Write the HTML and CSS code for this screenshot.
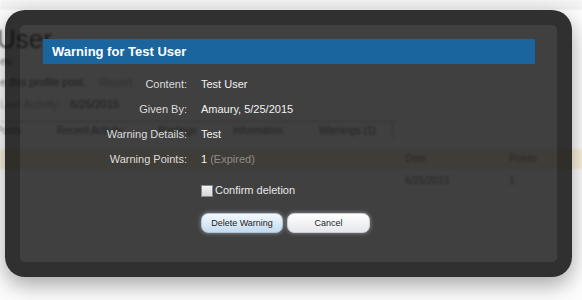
FILE: index.html
```html
<!DOCTYPE html>
<html lang="en">
<head>
  <meta charset="UTF-8">
  <title>Warning for Test User</title>
  <meta name="viewport" content="width=device-width, initial-scale=1.0">
  <link rel="stylesheet" href="styles.css">
</head>
<body>
  <div class="page">
    <div class="topbar"></div>

    <div class="profile">
      <h1 class="profile-name">User</h1>
      <p class="profile-sub">ev.</p>
      <p class="profile-post">e this profile post. <span class="muted">Report</span></p>
      <p class="profile-date"><span class="muted">Last Activity:</span> 6/25/2015</p>
    </div>

    <ul class="tabs">
      <li>Posts</li>
      <li>Recent Activity</li>
      <li>Postings</li>
      <li>Information</li>
      <li class="active">Warnings (1)</li>
    </ul>

    <div class="warn-table">
      <div class="warn-head">
        <span class="col-date">Date</span>
        <span class="col-points">Points</span>
      </div>
      <div class="warn-row">
        <span class="col-date">6/25/2015</span>
        <span class="col-points">1</span>
      </div>
    </div>
  </div>

  <div class="overlay">
    <h2 class="overlay-title">Warning for Test User</h2>

    <dl class="unit">
      <dt>Content:</dt>
      <dd>Test User</dd>
    </dl>
    <dl class="unit">
      <dt>Given By:</dt>
      <dd>Amaury, 5/25/2015</dd>
    </dl>
    <dl class="unit">
      <dt>Warning Details:</dt>
      <dd>Test</dd>
    </dl>
    <dl class="unit">
      <dt>Warning Points:</dt>
      <dd>1 <span class="expired">(Expired)</span></dd>
    </dl>

    <div class="unit confirm">
      <label><input type="checkbox" class="check"> Confirm deletion</label>
    </div>

    <div class="unit buttons">
      <button type="button" class="btn primary">Delete Warning</button>
      <button type="button" class="btn">Cancel</button>
    </div>
  </div>
</body>
</html>
```

FILE: styles.css
```css
* {
  box-sizing: border-box;
}

body {
  margin: 0;
  height: 300px;
  overflow: hidden;
  background: #fdfdfd;
  font-family: "Liberation Sans", Arial, sans-serif;
  font-size: 11px;
  color: #222;
}

/* page behind the overlay */

.page {
  filter: blur(0.8px);
}

.topbar {
  height: 9px;
  background: #f2f2f2;
  border-bottom: 1px solid #e2e2e2;
}

.profile {
  padding-top: 16px;
  color: #777;
}

.profile p {
  margin: 0;
  line-height: 16px;
}

.profile-name {
  margin: 0 0 0 -3px;
  font-size: 26px;
  font-weight: normal;
  line-height: 28px;
  color: #666;
}

.profile-post {
  margin-top: 5px !important;
}

.profile-date {
  margin-top: 6px !important;
}

.muted {
  color: #bbb;
  margin-left: 10px;
}

.profile-date .muted {
  margin: 0 6px 0 0;
}

.tabs {
  display: flex;
  gap: 36px;
  list-style: none;
  margin: 9px 0 0;
  padding: 0;
  font-size: 10px;
  color: #888;
  height: 18px;
  line-height: 18px;
  border-top: 1px solid #d4d4d4;
  width: 398px;
}

.tabs li:first-child {
  margin-left: -4px;
}

.tabs li.active {
  padding-right: 16px;
  border-right: 1px solid #d4d4d4;
}

.warn-table {
  margin-top: 10px;
  font-size: 10px;
  color: #999;
}

.warn-head,
.warn-row {
  display: flex;
  padding-left: 405px;
}

.warn-head {
  height: 20px;
  line-height: 20px;
  background: #fbf2da;
}

.warn-row {
  height: 24px;
  line-height: 24px;
}

.col-date {
  width: 104px;
}

/* overlay */

.overlay {
  position: absolute;
  left: 5px;
  top: 10px;
  width: 567px;
  padding: 14px 22px 29px 23px;
  background: rgba(0, 0, 0, 0.75);
  border: 15px solid rgba(0, 0, 0, 0.25);
  border-radius: 20px;
  box-shadow: 0 8px 22px rgba(0, 0, 0, 0.35);
  color: #e6e6e6;
}

.overlay-title {
  margin: 0;
  height: 25px;
  line-height: 25px;
  padding-left: 9px;
  background: #1a659e;
  color: #fff;
  font-size: 13px;
  font-weight: bold;
}

.unit {
  display: flex;
  margin: 10px 0 0;
  line-height: 15px;
}

.overlay-title + .unit {
  margin-top: 13px;
}

.unit dt {
  width: 144px;
  text-align: right;
  color: #dcdcdc;
}

.unit dd {
  margin: 0 0 0 14px;
  color: #f2f2f2;
}

.expired {
  color: #8c8c8c;
}

.confirm {
  margin-top: 16px;
  padding-left: 158px;
  color: #e8e8e8;
}

.confirm label {
  display: flex;
  align-items: center;
  gap: 2px;
}

.check {
  appearance: none;
  width: 12px;
  height: 12px;
  margin: 0;
  border: 1px solid #8a8a8a;
  background: linear-gradient(#f4f4f4, #d6d6d6);
}

.buttons {
  margin-top: 15px;
  padding-left: 158px;
  gap: 4px;
}

.btn {
  height: 20px;
  width: 83px;
  padding: 0;
  font-family: inherit;
  font-size: 9px;
  color: #1e1e1e;
  border: 1px solid #c8ccd4;
  border-radius: 7px;
  background: linear-gradient(#ffffff, #e6e7ec);
  box-shadow: 0 0 4px rgba(255, 255, 255, 0.45);
  cursor: pointer;
}

.btn.primary {
  width: 82px;
  border-color: #a9c4dc;
  background: linear-gradient(#f3f8fc, #c4dbef);
}
```
